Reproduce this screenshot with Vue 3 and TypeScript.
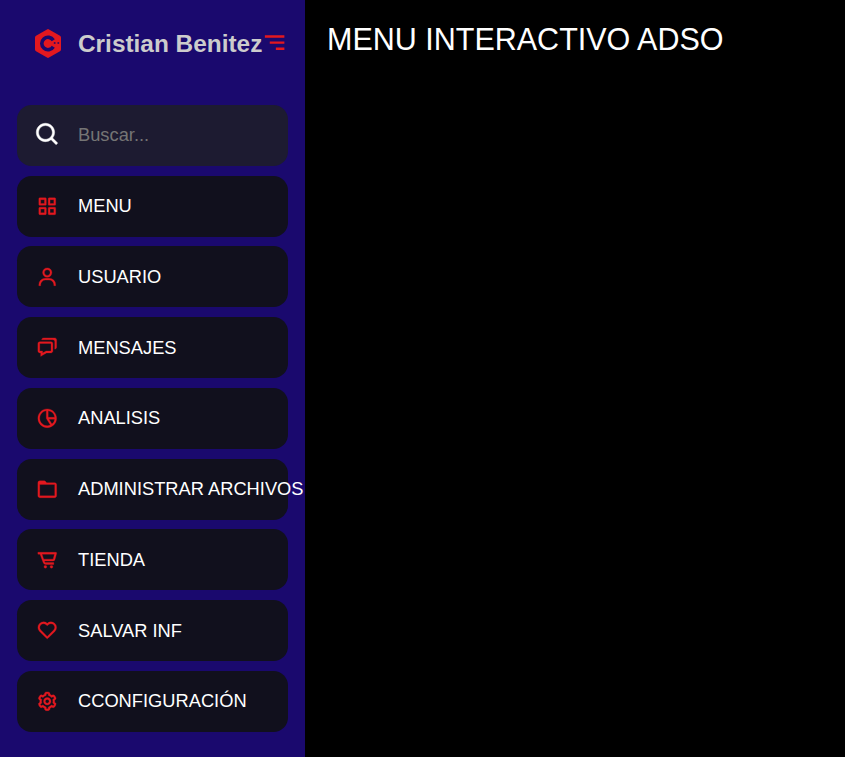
<script setup lang="ts">
import { ref } from 'vue'

interface NavItem {
  label: string
  paths: string[]
}

const query = ref('')

const items: NavItem[] = [
  {
    label: 'MENU',
    paths: [
      'M10 3H4a1 1 0 0 0-1 1v6a1 1 0 0 0 1 1h6a1 1 0 0 0 1-1V4a1 1 0 0 0-1-1zM9 9H5V5h4v4z',
      'M20 3h-6a1 1 0 0 0-1 1v6a1 1 0 0 0 1 1h6a1 1 0 0 0 1-1V4a1 1 0 0 0-1-1zm-1 6h-4V5h4v4z',
      'M10 13H4a1 1 0 0 0-1 1v6a1 1 0 0 0 1 1h6a1 1 0 0 0 1-1v-6a1 1 0 0 0-1-1zm-1 6H5v-4h4v4z',
      'M20 13h-6a1 1 0 0 0-1 1v6a1 1 0 0 0 1 1h6a1 1 0 0 0 1-1v-6a1 1 0 0 0-1-1zm-1 6h-4v-4h4v4z',
    ],
  },
  {
    label: 'USUARIO',
    paths: [
      'M12 2a5 5 0 1 0 5 5 5 5 0 0 0-5-5zm0 8a3 3 0 1 1 3-3 3 3 0 0 1-3 3zm9 11v-1a7 7 0 0 0-7-7h-4a7 7 0 0 0-7 7v1h2v-1a5 5 0 0 1 5-5h4a5 5 0 0 1 5 5v1z',
    ],
  },
  {
    label: 'MENSAJES',
    paths: [
      'M5 18v3.766l1.515-.909L11.277 18H16c1.103 0 2-.897 2-2V8c0-1.103-.897-2-2-2H4c-1.103 0-2 .897-2 2v8c0 1.103.897 2 2 2h1zM4 8h12v8h-5.277L7 18.234V16H4V8z',
      'M20 2H8c-1.103 0-2 .897-2 2h12c1.103 0 2 .897 2 2v8c1.103 0 2-.897 2-2V4c0-1.103-.897-2-2-2z',
    ],
  },
  {
    label: 'ANALISIS',
    paths: [
      'M12 2C6.486 2 2 6.486 2 12s4.486 10 10 10 10-4.486 10-10S17.514 2 12 2zm7.931 9H13V4.069A8.008 8.008 0 0 1 19.931 11zM4 12c0-4.072 3.061-7.436 7-7.931V12a.996.996 0 0 0 .111.438c.015.03.022.063.041.093l4.202 6.723A7.949 7.949 0 0 1 12 20c-4.411 0-8-3.589-8-8zm13.052 6.196L13.805 13h6.126a7.992 7.992 0 0 1-2.879 5.196z',
    ],
  },
  {
    label: 'ADMINISTRAR ARCHIVOS',
    paths: [
      'M20 5h-8.586L9.707 3.293A.997.997 0 0 0 9 3H4c-1.103 0-2 .897-2 2v14c0 1.103.897 2 2 2h16c1.103 0 2-.897 2-2V7c0-1.103-.897-2-2-2zM4 19V7h16l.002 12H4z',
    ],
  },
  {
    label: 'TIENDA',
    paths: [
      'M21.500 3.500H2v2h2.300l3.280 9a3 3 0 0 0 2.820 2H19v-2h-8.600a.89.89 0 0 1-.94-.66L9 12.800h9.280a2 2 0 0 0 1.920-1.450L22 4.800A1 1 0 0 0 21.500 3.500zm-3.250 7.300h-10L6.430 5.500h13.240z',
      'M8.500 19a1.500 1.500 0 1 0 3 0 1.500 1.500 0 1 0-3 0z',
      'M15 19a1.500 1.500 0 1 0 3 0 1.500 1.500 0 1 0-3 0z',
    ],
  },
  {
    label: 'SALVAR INF',
    paths: [
      'M12 4.595a5.904 5.904 0 0 0-3.996-1.558 5.942 5.942 0 0 0-4.213 1.758c-2.353 2.363-2.352 6.059.002 8.412l7.332 7.332c.17.299.498.492.875.492a.99.99 0 0 0 .792-.409l7.415-7.415c2.354-2.354 2.354-6.049-.002-8.416a5.938 5.938 0 0 0-4.209-1.754A5.906 5.906 0 0 0 12 4.595zm6.791 1.61c1.563 1.571 1.564 4.025.002 5.588L12 18.586l-6.793-6.793c-1.562-1.563-1.561-4.017-.002-5.584.76-.756 1.754-1.172 2.799-1.172s2.035.416 2.789 1.17l.5.5a.999.999 0 0 0 1.414 0l.5-.5c1.512-1.509 4.074-1.505 5.584-.002z',
    ],
  },
  {
    label: 'CCONFIGURACIÓN',
    paths: [
      'M12 16c2.206 0 4-1.794 4-4s-1.794-4-4-4-4 1.794-4 4 1.794 4 4 4zm0-6c1.084 0 2 .916 2 2s-.916 2-2 2-2-.916-2-2 .916-2 2-2z',
      'm2.845 16.136 1 1.73c.531.917 1.809 1.261 2.73.73l.529-.306A8.1 8.1 0 0 0 9 19.402V20c0 1.103.897 2 2 2h2c1.103 0 2-.897 2-2v-.598a8.132 8.132 0 0 0 1.896-1.111l.529.306c.923.53 2.198.188 2.731-.731l.999-1.729a2.001 2.001 0 0 0-.731-2.732l-.505-.292a7.718 7.718 0 0 0 0-2.224l.505-.292a2.002 2.002 0 0 0 .731-2.732l-.999-1.729c-.531-.92-1.808-1.265-2.731-.732l-.529.306A8.1 8.1 0 0 0 15 4.598V4c0-1.103-.897-2-2-2h-2c-1.103 0-2 .897-2 2v.598a8.132 8.132 0 0 0-1.896 1.111l-.529-.306c-.924-.531-2.2-.187-2.731.732l-.999 1.729a2.001 2.001 0 0 0 .731 2.732l.505.292a7.683 7.683 0 0 0 0 2.223l-.505.292a2.003 2.003 0 0 0-.731 2.733zm3.326-2.758A5.703 5.703 0 0 1 6 12c0-.462.058-.926.17-1.378a.999.999 0 0 0-.47-1.108l-1.123-.65.998-1.729 1.145.662a.997.997 0 0 0 1.188-.142 6.071 6.071 0 0 1 2.384-1.399A1 1 0 0 0 11 5.3V4h2v1.3a1 1 0 0 0 .708.956 6.083 6.083 0 0 1 2.384 1.399.999.999 0 0 0 1.188.142l1.144-.661 1 1.729-1.124.649a1 1 0 0 0-.47 1.108c.112.452.17.916.17 1.378 0 .461-.058.925-.171 1.378a1 1 0 0 0 .471 1.108l1.123.649-.998 1.729-1.145-.661a.996.996 0 0 0-1.188.142 6.071 6.071 0 0 1-2.384 1.399A1 1 0 0 0 13 18.7l.002 1.3H11v-1.3a1 1 0 0 0-.708-.956 6.083 6.083 0 0 1-2.384-1.399.992.992 0 0 0-1.188-.141l-1.144.662-1-1.729 1.124-.651a1 1 0 0 0 .471-1.108z',
    ],
  },
]
</script>

<template>
  <div class="layout">
    <aside class="sidebar">
      <header class="brand">
        <svg class="logo" viewBox="0 0 26 29">
          <path class="logo-shape" d="M12 .4a2 2 0 0 1 2 0l11 6.3a2 2 0 0 1 1 1.7v12.2a2 2 0 0 1-1 1.7l-11 6.3a2 2 0 0 1-2 0L1 22.300a2 2 0 0 1-1-1.700V8.400a2 2 0 0 1 1-1.700z" />
          <path class="logo-ring" d="M18.300 11.300A6.200 6.200 0 1 0 18.300 17.700" />
          <path class="logo-plus" d="M18.700 14h2M19.700 13v2M22.300 14h2M23.300 13v2" />
        </svg>
        <span class="name">Cristian Benitez</span>
        <svg class="toggle" viewBox="0 0 24 24">
          <path d="M4 6h16v2H4zm4 5h12v2H8zm5 5h7v2h-7z" />
        </svg>
      </header>
      <nav class="list">
        <label class="row search">
          <span class="slot">
            <svg class="search-icon" viewBox="0 0 24 24">
              <path d="M10 18a7.952 7.952 0 0 0 4.897-1.688l4.396 4.396 1.414-1.414-4.396-4.396A7.952 7.952 0 0 0 18 10c0-4.411-3.589-8-8-8s-8 3.589-8 8 3.589 8 8 8zm0-14c3.309 0 6 2.691 6 6s-2.691 6-6 6-6-2.691-6-6 2.691-6 6-6z" />
            </svg>
          </span>
          <input v-model="query" class="field" type="text" placeholder="Buscar..." />
        </label>
        <a v-for="item in items" :key="item.label" class="row">
          <span class="slot">
            <svg class="icon" viewBox="0 0 24 24">
              <path v-for="d in item.paths" :key="d" :d="d" />
            </svg>
          </span>
          <span class="label">{{ item.label }}</span>
        </a>
      </nav>
    </aside>
    <main class="content">
      <div class="title">MENU INTERACTIVO ADSO</div>
    </main>
  </div>
</template>

<style>
body {
  margin: 0;
  background: #000;
}
</style>

<style scoped>
.layout {
  display: flex;
  height: 757px;
  overflow: hidden;
  background: #000;
  font-family: "Liberation Sans", Arial, sans-serif;
}

.sidebar {
  box-sizing: border-box;
  flex: none;
  width: 305px;
  height: 100%;
  padding: 7px 17px 0;
  background: #1a096e;
}

.brand {
  display: flex;
  align-items: center;
  height: 73px;
  padding-left: 18px;
}

.logo {
  flex: none;
  width: 26px;
  height: 29px;
  margin-right: 17px;
  margin-bottom: 1px;
}

.logo-shape {
  fill: #e3181f;
}

.logo-ring {
  fill: none;
  stroke: #1a096e;
  stroke-width: 3.6;
}

.logo-plus {
  fill: none;
  stroke: #1a096e;
  stroke-width: 0.8;
}

.name {
  flex: none;
  width: 182px;
  font-size: 24.4px;
  font-weight: 700;
  white-space: nowrap;
  color: #ccc;
}

.toggle {
  flex: none;
  width: 29.28px;
  height: 29.28px;
  margin-bottom: 2px;
  fill: #e3181f;
}

.list {
  display: flex;
  flex-direction: column;
  gap: 9.76px;
  margin-top: 24.8px;
}

.row {
  display: flex;
  align-items: center;
  width: 271px;
  height: 61px;
  border-radius: 14.6px;
  background: #11101d;
}

.search {
  background: #1d1b31;
}

.slot {
  display: flex;
  flex: none;
  align-items: center;
  justify-content: center;
  width: 61px;
}

.icon {
  width: 22.5px;
  height: 22.5px;
  fill: #e3181f;
  stroke: #e3181f;
  stroke-width: 0.3;
}

.search-icon {
  width: 27.5px;
  height: 27.5px;
  margin-bottom: 1px;
  fill: #fff;
  stroke: #fff;
  stroke-width: 0.4;
}

.label {
  font-size: 18.3px;
  white-space: nowrap;
  color: #fff;
}

.field {
  width: 190px;
  padding: 0 0 1px;
  border: 0;
  outline: 0;
  background: transparent;
  font-family: inherit;
  font-size: 18.3px;
  color: #fff;
}

.field::placeholder {
  color: #757575;
}

.content {
  flex: 1;
  padding: 22px;
}

.title {
  font-size: 30.5px;
  line-height: 35px;
  white-space: nowrap;
  color: #fff;
}
</style>
